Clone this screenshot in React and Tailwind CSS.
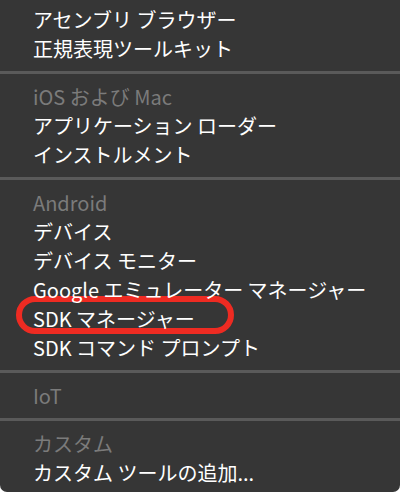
const groups = [
  { title: null, items: ["アセンブリ ブラウザー", "正規表現ツールキット"] },
  { title: "iOS および Mac", items: ["アプリケーション ローダー", "インストルメント"] },
  {
    title: "Android",
    items: [
      "デバイス",
      "デバイス モニター",
      "Google エミュレーター マネージャー",
      "SDK マネージャー",
      "SDK コマンド プロンプト",
    ],
  },
  { title: "IoT", items: [] },
  { title: "カスタム", items: ["カスタム ツールの追加..."] },
];

function Row({ children, muted, marked }) {
  return (
    <div
      className={`relative h-[29px] flex items-center pl-[33px] whitespace-nowrap ${
        muted ? "text-[#7b7b7b]" : "text-white"
      }`}
    >
      <span className="relative z-10">{children}</span>
      {marked && (
        <span className="absolute left-[16px] top-[-8px] w-[218px] h-[38px] rounded-full border-[6px] border-[#ee2b22]" />
      )}
    </div>
  );
}

export default function App() {
  return (
    <div className="w-[400px] h-[492px] bg-white">
      <div
        className="w-full h-full bg-[#363636] rounded-b-[7px] pt-[5px] text-[20px] leading-none"
        style={{ fontFamily: '"Noto Sans CJK JP", "Noto Sans", sans-serif' }}
      >
        {groups.map((g, gi) => (
          <div key={gi}>
            {gi > 0 && (
              <div className="h-[19px] flex items-center">
                <div className="w-full h-[3px] bg-[#5a5a5a]" />
              </div>
            )}
            {g.title && <Row muted>{g.title}</Row>}
            {g.items.map((it) => (
              <Row key={it} marked={it === "SDK マネージャー"}>
                {it}
              </Row>
            ))}
          </div>
        ))}
      </div>
    </div>
  );
}
